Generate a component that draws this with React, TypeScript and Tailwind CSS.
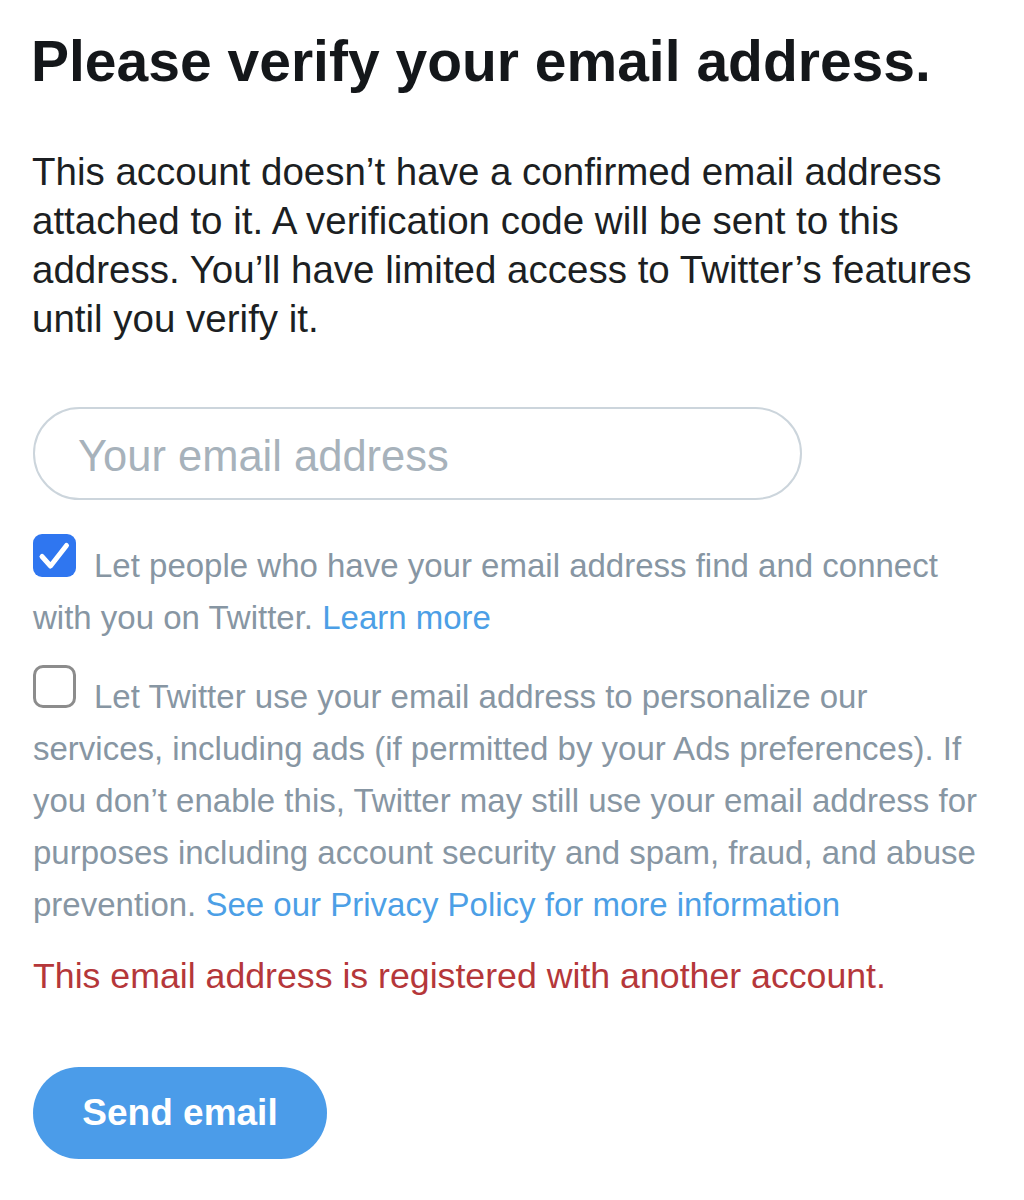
import { useState } from 'react'

function CheckBox({ checked }: { checked: boolean }) {
  // drawn as an inline svg so its bottom sits on the text baseline
  return (
    <svg
      width="43"
      height="43"
      viewBox="0 0 43 43"
      className="inline align-baseline mr-[18px]"
      aria-hidden="true"
    >
      {checked ? (
        <>
          <rect x="0" y="0" width="43" height="43" rx="9" fill="#2f76f0" />
          <path
            d="M9 22.5 L17.5 32 L33.5 11.5"
            fill="none"
            stroke="#fff"
            strokeWidth="5"
            strokeLinecap="round"
            strokeLinejoin="round"
          />
        </>
      ) : (
        <rect x="1.5" y="1.5" width="40" height="40" rx="8.5" fill="none" stroke="#8c8c8c" strokeWidth="3" />
      )}
    </svg>
  )
}

export default function App() {
  const [email, setEmail] = useState('')

  return (
    <div className="w-[1024px] min-h-[1200px] bg-white pl-[33px] pt-[33px] font-['Liberation_Sans',Arial,sans-serif] text-[#14171a]">
      <h1 className="-ml-[2px] text-[57px] font-bold leading-none whitespace-nowrap">
        Please verify your email address.
      </h1>

      <p className="mt-[57px] -ml-px text-[38.5px] leading-[49px] whitespace-nowrap text-[#1c1f23]">
        This account doesn’t have a confirmed email address
        <br />
        attached to it. A verification code will be sent to this
        <br />
        address. You’ll have limited access to Twitter’s features
        <br />
        until you verify it.
      </p>

      <input
        type="email"
        value={email}
        onChange={(e) => setEmail(e.target.value)}
        placeholder="Your email address"
        className="mt-[64px] block h-[93px] w-[769px] rounded-full border-2 border-[#ccd5dc] bg-white pl-[43px] pt-[5px] text-[43.5px] text-[#14171a] outline-none placeholder:text-[#a7b2bb]"
      />

      <p className="mt-[34px] text-[33px] leading-[52px] whitespace-nowrap text-[#8796a3]">
        <CheckBox checked />
        Let people who have your email address find and connect
        <br />
        with you on Twitter. <a className="text-[#4c9fe6]">Learn more</a>
      </p>

      <p className="mt-[21px] text-[33px] leading-[52px] whitespace-nowrap text-[#8796a3]">
        <CheckBox checked={false} />
        Let Twitter use your email address to personalize our
        <br />
        services, including ads (if permitted by your Ads preferences). If
        <br />
        you don’t enable this, Twitter may still use your email address for
        <br />
        purposes including account security and spam, fraud, and abuse
        <br />
        prevention. <a className="text-[#4c9fe6]">See our Privacy Policy for more information</a>
      </p>

      <p className="mt-[21px] text-[35.7px] leading-[48px] whitespace-nowrap text-[#b5373a]">
        This email address is registered with another account.
      </p>

      <button className="mt-[67px] flex h-[92px] w-[294px] items-center justify-center rounded-full bg-[#4b9ce9] text-[37px] font-bold text-white">
        Send email
      </button>
    </div>
  )
}
